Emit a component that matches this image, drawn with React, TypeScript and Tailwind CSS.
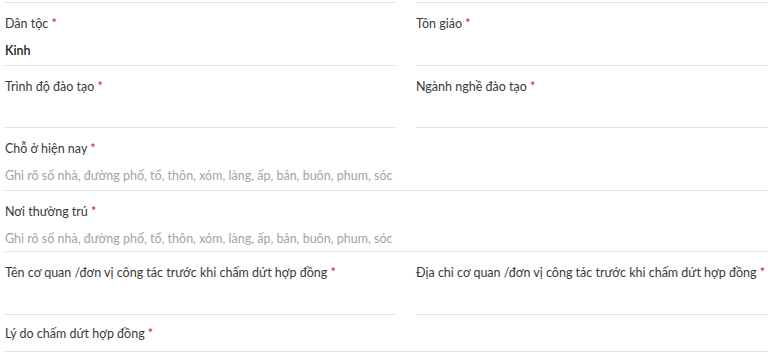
const FONT = "font-['Lato','Open_Sans',sans-serif]"

interface FieldProps {
  label: string
  value?: string
  placeholder?: string
  h: string
}

function Label({ text }: { text: string }) {
  return (
    <div className="text-[12.5px] leading-[18px] text-[#3a3a3a] whitespace-nowrap">
      {text} <span className="text-[#c8102e]">*</span>
    </div>
  )
}

function Field({ label, value, placeholder, h }: FieldProps) {
  return (
    <div className={`${h} flex flex-col border-b border-[#e3e3e3] pt-[12px]`}>
      <Label text={label} />
      {value && (
        <div className="mt-[9px] text-[12.5px] leading-[18px] font-semibold text-[#222]">{value}</div>
      )}
      {placeholder && (
        <div className="mt-[9px] text-[12.5px] leading-[18px] text-[#a3a3a3] whitespace-nowrap">{placeholder}</div>
      )}
    </div>
  )
}

function Empty({ h }: { h: string }) {
  return <div className={`${h} border-b border-[#e3e3e3]`} />
}

const PLACEHOLDER = 'Ghi rõ số nhà, đường phố, tổ, thôn, xóm, làng, ấp, bản, buôn, phum, sóc'

export default function App() {
  return (
    <div className={`w-[768px] h-[352px] overflow-hidden bg-white pl-[5px] ${FONT}`}>
      {/* top edge of the previous row */}
      <div className="grid grid-cols-[390px_1fr] gap-x-[21px]">
        <Empty h="h-[3px]" />
        <Empty h="h-[3px]" />
        <Field h="h-[63px]" label="Dân tộc" value="Kinh" />
        <Field h="h-[63px]" label="Tôn giáo" />
        <Field h="h-[62px]" label="Trình độ đào tạo" />
        <Field h="h-[62px]" label="Ngành nghề đào tạo" />
      </div>

      <Field h="h-[63px]" label="Chỗ ở hiện nay" placeholder={PLACEHOLDER} />
      <Field h="h-[61px]" label="Nơi thường trú" placeholder={PLACEHOLDER} />

      <div className="grid grid-cols-[390px_1fr] gap-x-[21px]">
        <Field h="h-[63px]" label="Tên cơ quan /đơn vị công tác trước khi chấm dứt hợp đồng" />
        <Field h="h-[63px]" label="Địa chỉ cơ quan /đơn vị công tác trước khi chấm dứt hợp đồng" />
      </div>

      <div className="h-[37px] border-b border-[#e3e3e3] pt-[10px]">
        <Label text="Lý do chấm dứt hợp đồng" />
      </div>
    </div>
  )
}
